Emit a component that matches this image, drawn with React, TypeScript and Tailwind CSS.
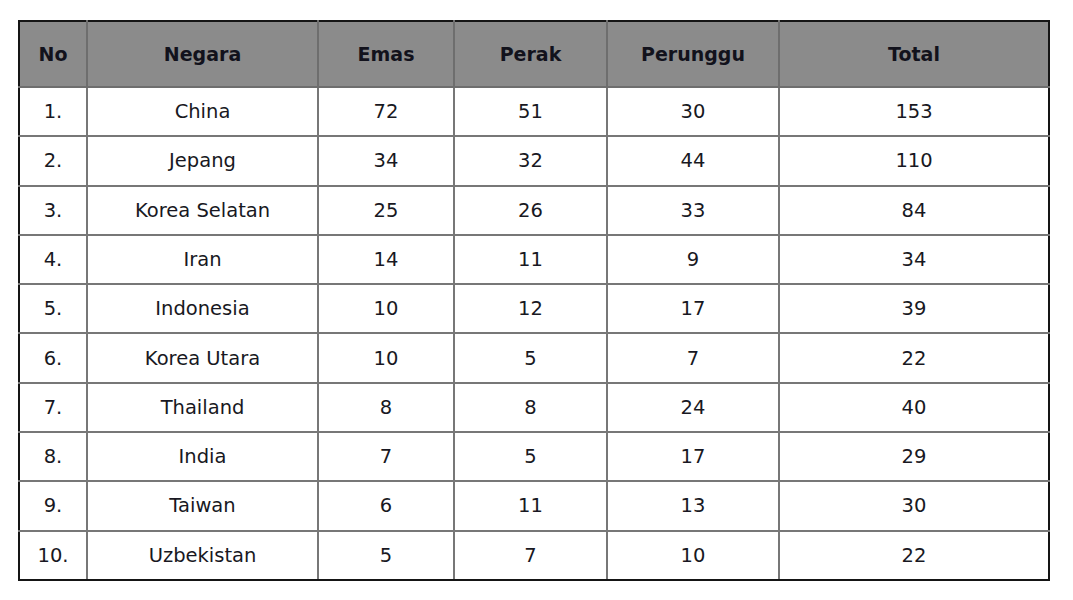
import React from 'react';

interface Medal {
  no: string;
  negara: string;
  emas: number;
  perak: number;
  perunggu: number;
  total: number;
}

const rows: Medal[] = [
  { no: '1.', negara: 'China', emas: 72, perak: 51, perunggu: 30, total: 153 },
  { no: '2.', negara: 'Jepang', emas: 34, perak: 32, perunggu: 44, total: 110 },
  { no: '3.', negara: 'Korea Selatan', emas: 25, perak: 26, perunggu: 33, total: 84 },
  { no: '4.', negara: 'Iran', emas: 14, perak: 11, perunggu: 9, total: 34 },
  { no: '5.', negara: 'Indonesia', emas: 10, perak: 12, perunggu: 17, total: 39 },
  { no: '6.', negara: 'Korea Utara', emas: 10, perak: 5, perunggu: 7, total: 22 },
  { no: '7.', negara: 'Thailand', emas: 8, perak: 8, perunggu: 24, total: 40 },
  { no: '8.', negara: 'India', emas: 7, perak: 5, perunggu: 17, total: 29 },
  { no: '9.', negara: 'Taiwan', emas: 6, perak: 11, perunggu: 13, total: 30 },
  { no: '10.', negara: 'Uzbekistan', emas: 5, perak: 7, perunggu: 10, total: 22 },
];

const headers = ['No', 'Negara', 'Emas', 'Perak', 'Perunggu', 'Total'];

// edge cells carry the dark outer frame, inner lines stay grey
const cell =
  'border-2 border-[#777] text-center first:border-l-[#151515] last:border-r-[#151515]';

export default function App() {
  return (
    <div className="w-[1073px] h-[600px] bg-white pt-[20px] pl-[18px] font-['DejaVu_Sans',sans-serif]">
      <table className="table-fixed border-collapse w-[1030px] text-[19.5px]">
        <colgroup>
          <col className="w-[68px]" />
          <col className="w-[231px]" />
          <col className="w-[136px]" />
          <col className="w-[153px]" />
          <col className="w-[172px]" />
          <col className="w-[270px]" />
        </colgroup>
        <thead>
          <tr className="h-[66px] bg-[#8b8b8b]">
            {headers.map(h => (
              <th
                key={h}
                className="border-2 border-[#6e6e6e] border-t-[#151515] first:border-l-[#151515] last:border-r-[#151515] font-bold text-[19px] text-[#12121c] text-center"
              >
                {h}
              </th>
            ))}
          </tr>
        </thead>
        <tbody>
          {rows.map(r => (
            <tr key={r.no} className="group h-[49.3px] text-[#181822]">
              {[r.no, r.negara, r.emas, r.perak, r.perunggu, r.total].map((v, i) => (
                <td key={i} className={`${cell} group-last:border-b-[#151515]`}>
                  {v}
                </td>
              ))}
            </tr>
          ))}
        </tbody>
      </table>
    </div>
  );
}
